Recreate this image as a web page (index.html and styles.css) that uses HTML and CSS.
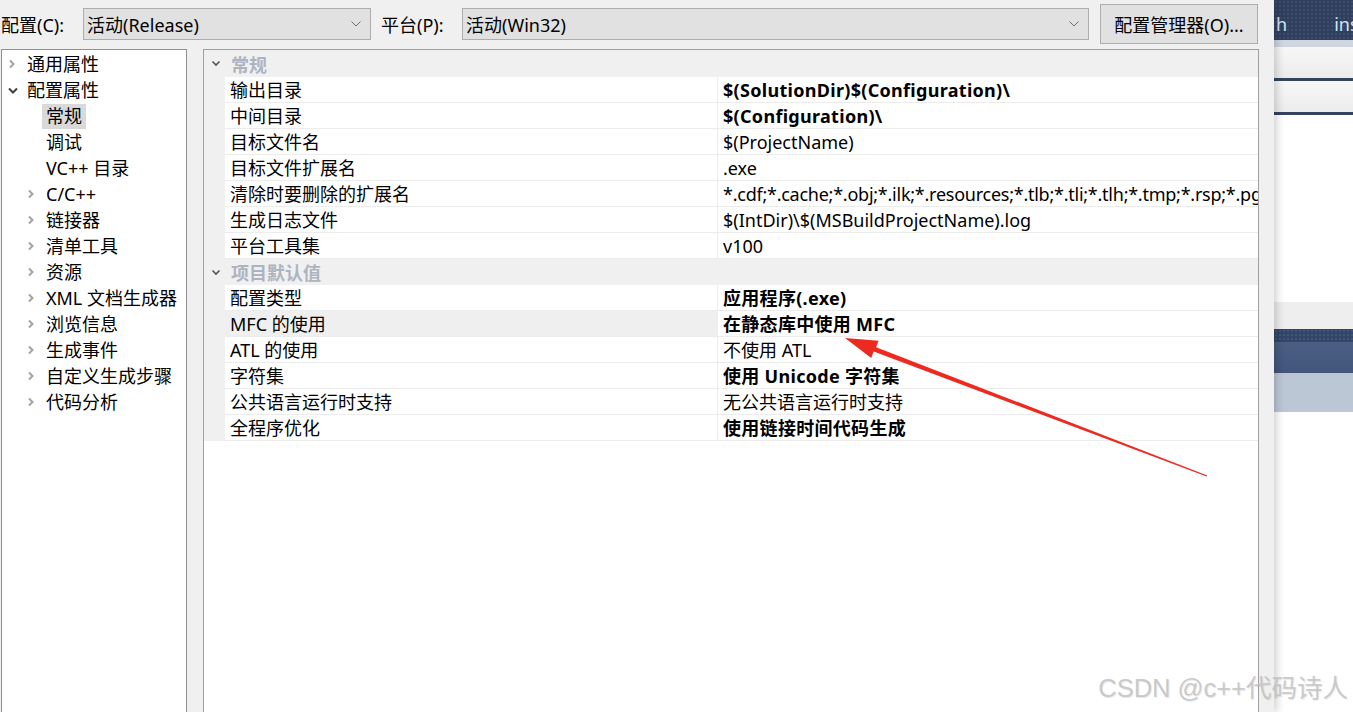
FILE: index.html
```html
<!DOCTYPE html>
<html lang="zh-CN">
<head>
    <meta charset="UTF-8">
    <title>属性页</title>
    <link rel="stylesheet" href="styles.css">
</head>
<body>
<div class="dialog">
    <div class="toolbar">
        <span class="label">配置(C):</span>
        <div class="combo combo-config">
            <span>活动(Release)</span>
            <svg class="drop" width="10" height="6" viewBox="0 0 10 6"><polyline points="0.5,0.5 5,5 9.5,0.5" fill="none" stroke="#6d6d6d" stroke-width="1"/></svg>
        </div>
        <span class="label label-platform">平台(P):</span>
        <div class="combo combo-platform">
            <span>活动(Win32)</span>
            <svg class="drop" width="10" height="6" viewBox="0 0 10 6"><polyline points="0.5,0.5 5,5 9.5,0.5" fill="none" stroke="#6d6d6d" stroke-width="1"/></svg>
        </div>
        <button class="btn">配置管理器(O)...</button>
    </div>

    <div class="main">
        <div class="tree">
            <div class="node"><span class="twig"><svg class="closed" width="8" height="10" viewBox="0 0 8 10"><polyline points="2,1.5 5.5,5 2,8.5" fill="none" stroke="#a3a3a3" stroke-width="2"/></svg></span><span class="name">通用属性</span></div>
            <div class="node"><span class="twig"><svg class="open" width="10" height="7" viewBox="0 0 10 7"><polyline points="1,1.5 5,5.5 9,1.5" fill="none" stroke="#404040" stroke-width="2"/></svg></span><span class="name">配置属性</span></div>
            <div class="node child"><span class="twig"></span><span class="name selected">常规</span></div>
            <div class="node child"><span class="twig"></span><span class="name">调试</span></div>
            <div class="node child"><span class="twig"></span><span class="name">VC++ 目录</span></div>
            <div class="node child"><span class="twig"><svg class="closed" width="8" height="10" viewBox="0 0 8 10"><polyline points="2,1.5 5.5,5 2,8.5" fill="none" stroke="#a3a3a3" stroke-width="2"/></svg></span><span class="name">C/C++</span></div>
            <div class="node child"><span class="twig"><svg class="closed" width="8" height="10" viewBox="0 0 8 10"><polyline points="2,1.5 5.5,5 2,8.5" fill="none" stroke="#a3a3a3" stroke-width="2"/></svg></span><span class="name">链接器</span></div>
            <div class="node child"><span class="twig"><svg class="closed" width="8" height="10" viewBox="0 0 8 10"><polyline points="2,1.5 5.5,5 2,8.5" fill="none" stroke="#a3a3a3" stroke-width="2"/></svg></span><span class="name">清单工具</span></div>
            <div class="node child"><span class="twig"><svg class="closed" width="8" height="10" viewBox="0 0 8 10"><polyline points="2,1.5 5.5,5 2,8.5" fill="none" stroke="#a3a3a3" stroke-width="2"/></svg></span><span class="name">资源</span></div>
            <div class="node child"><span class="twig"><svg class="closed" width="8" height="10" viewBox="0 0 8 10"><polyline points="2,1.5 5.5,5 2,8.5" fill="none" stroke="#a3a3a3" stroke-width="2"/></svg></span><span class="name">XML 文档生成器</span></div>
            <div class="node child"><span class="twig"><svg class="closed" width="8" height="10" viewBox="0 0 8 10"><polyline points="2,1.5 5.5,5 2,8.5" fill="none" stroke="#a3a3a3" stroke-width="2"/></svg></span><span class="name">浏览信息</span></div>
            <div class="node child"><span class="twig"><svg class="closed" width="8" height="10" viewBox="0 0 8 10"><polyline points="2,1.5 5.5,5 2,8.5" fill="none" stroke="#a3a3a3" stroke-width="2"/></svg></span><span class="name">生成事件</span></div>
            <div class="node child"><span class="twig"><svg class="closed" width="8" height="10" viewBox="0 0 8 10"><polyline points="2,1.5 5.5,5 2,8.5" fill="none" stroke="#a3a3a3" stroke-width="2"/></svg></span><span class="name">自定义生成步骤</span></div>
            <div class="node child"><span class="twig"><svg class="closed" width="8" height="10" viewBox="0 0 8 10"><polyline points="2,1.5 5.5,5 2,8.5" fill="none" stroke="#a3a3a3" stroke-width="2"/></svg></span><span class="name">代码分析</span></div>
        </div>

        <div class="grid">
            <div class="section first">
                <span class="gutter"><svg width="10" height="7" viewBox="0 0 10 7"><polyline points="1.5,1.5 5,5 8.5,1.5" fill="none" stroke="#555" stroke-width="1.6"/></svg></span>
                <span class="section-title">常规</span>
            </div>
            <div class="row"><span class="gutter"></span><span class="prop">输出目录</span><span class="val bold">$(SolutionDir)$(Configuration)\</span></div>
            <div class="row"><span class="gutter"></span><span class="prop">中间目录</span><span class="val bold">$(Configuration)\</span></div>
            <div class="row"><span class="gutter"></span><span class="prop">目标文件名</span><span class="val">$(ProjectName)</span></div>
            <div class="row"><span class="gutter"></span><span class="prop">目标文件扩展名</span><span class="val">.exe</span></div>
            <div class="row"><span class="gutter"></span><span class="prop">清除时要删除的扩展名</span><span class="val tight">*.cdf;*.cache;*.obj;*.ilk;*.resources;*.tlb;*.tli;*.tlh;*.tmp;*.rsp;*.pgc;*.pgd;*.meta;*.tlog;*.manifest;*.res;*.pch;*.exp;*.idb;*.rep;*.xdc;*.pdb;*_manifest.rc;*.bsc;*.sbr;*.xml;*.metagen;*.bi</span></div>
            <div class="row"><span class="gutter"></span><span class="prop">生成日志文件</span><span class="val">$(IntDir)\$(MSBuildProjectName).log</span></div>
            <div class="row"><span class="gutter"></span><span class="prop">平台工具集</span><span class="val">v100</span></div>
            <div class="section">
                <span class="gutter"><svg width="10" height="7" viewBox="0 0 10 7"><polyline points="1.5,1.5 5,5 8.5,1.5" fill="none" stroke="#555" stroke-width="1.6"/></svg></span>
                <span class="section-title">项目默认值</span>
            </div>
            <div class="row"><span class="gutter"></span><span class="prop">配置类型</span><span class="val bold">应用程序(.exe)</span></div>
            <div class="row current"><span class="gutter"></span><span class="prop">MFC 的使用</span><span class="val bold">在静态库中使用 MFC</span></div>
            <div class="row"><span class="gutter"></span><span class="prop">ATL 的使用</span><span class="val">不使用 ATL</span></div>
            <div class="row"><span class="gutter"></span><span class="prop">字符集</span><span class="val bold">使用 Unicode 字符集</span></div>
            <div class="row"><span class="gutter"></span><span class="prop">公共语言运行时支持</span><span class="val">无公共语言运行时支持</span></div>
            <div class="row"><span class="gutter"></span><span class="prop">全程序优化</span><span class="val bold">使用链接时间代码生成</span></div>
        </div>
    </div>
</div>

<div class="backwin">
    <div class="bw-title"><span class="bw-tab">h</span><span class="bw-tab">ins</span></div>
    <div class="bw-line"></div>
    <div class="bw-bar"></div>
    <div class="bw-dark thin"></div>
    <div class="bw-bar"></div>
    <div class="bw-dark thin"></div>
    <div class="bw-white tall"></div>
    <div class="bw-gray"></div>
    <div class="bw-dots"></div>
    <div class="bw-blue"></div>
    <div class="bw-pale"></div>
    <div class="bw-white"></div>
</div>

<!-- annotation drawn over the screenshot -->
<svg class="arrow" width="1353" height="712" viewBox="0 0 1353 712">
    <polygon points="845,338 878.6,340.8 876.1,347.2 1207.3,475.4 1206.7,476.6 873.7,351.6 871.2,358" fill="#ee2a20"/>
</svg>
<div class="watermark">CSDN @c++代码诗人</div>
</body>
</html>
```

FILE: styles.css
```css
body {
    margin: 0;
    height: 712px;
    overflow: hidden;
    display: flex;
    position: relative;
    font-family: "Noto Sans", "Noto Sans CJK SC", sans-serif;
    font-size: 18px;
    color: #000;
    background: #fff;
}

.dialog {
    width: 1274px;
    flex: none;
    display: flex;
    flex-direction: column;
    background-color: #f0f0f0;
    position: relative;
    z-index: 1;
    box-shadow: 3px 0 8px rgba(0, 0, 0, 0.18);
}

/* top row: configuration / platform pickers */
.toolbar {
    height: 49px;
    flex: none;
    display: flex;
    align-items: center;
    padding: 0 0 2px 1px;
    box-sizing: border-box;
}

.label {
    width: 82px;
    white-space: nowrap;
}

.label-platform {
    width: 81px;
    margin-left: 10px;
}

.combo {
    height: 32px;
    box-sizing: border-box;
    background-color: #e1e1e1;
    border: 1px solid #adadad;
    display: flex;
    align-items: center;
    justify-content: space-between;
    padding: 0 9px 0 3px;
    white-space: nowrap;
}

.combo-config {
    width: 288px;
}

.combo-platform {
    width: 627px;
}

.btn {
    width: 158px;
    height: 40px;
    margin-left: 11px;
    background-color: #e1e1e1;
    border: 1px solid #adadad;
    font: inherit;
    color: #000;
    padding: 0;
    white-space: nowrap;
}

.main {
    flex: 1;
    display: flex;
    gap: 16px;
    padding-left: 1px;
    min-height: 0;
}

/* left tree */
.tree {
    width: 186px;
    box-sizing: border-box;
    background: #fff;
    border: 1px solid #8f8f96;
    border-bottom: none;
    padding-top: 1px;
}

.node {
    height: 26px;
    display: flex;
    align-items: center;
    padding-left: 2px;
    white-space: nowrap;
}

.node.child {
    padding-left: 21px;
}

.twig {
    width: 19px;
    flex: none;
    display: flex;
    align-items: center;
    justify-content: center;
}

.twig .open {
    margin-left: -2px;
}

.twig .closed {
    margin-left: -3px;
}

.name {
    padding: 0 4px;
    line-height: 25px;
}

.name.selected {
    background-color: #d9d9d9;
}

/* property grid */
.grid {
    width: 1056px;
    box-sizing: border-box;
    background: #fff;
    border: 1px solid #a0a0a0;
    border-bottom: none;
    display: flex;
    flex-direction: column;
}

.section {
    height: 26px;
    flex: none;
    display: flex;
    align-items: center;
    background-color: #f0f0f0;
}

.section.first {
    height: 27px;
}

.section-title {
    padding-left: 6px;
    font-weight: bold;
    color: #adb4c0;
}

.gutter {
    width: 21px;
    flex: none;
    align-self: stretch;
    background-color: #f0f0f0;
    display: flex;
    align-items: center;
    justify-content: center;
    padding-left: 3px;
    box-sizing: border-box;
}

.row {
    height: 26px;
    flex: none;
    display: flex;
}

.prop,
.val {
    box-sizing: border-box;
    border-bottom: 1px solid #ececec;
    line-height: 26px;
    white-space: nowrap;
    overflow: hidden;
}

.prop {
    width: 492px;
    flex: none;
    padding-left: 5px;
}

.val {
    flex: 1;
    min-width: 0;
    padding-left: 5px;
    border-left: 1px solid #ececec;
}

.val.bold {
    font-weight: bold;
    letter-spacing: 0.3px;
}

.val.tight {
    letter-spacing: -0.25px;
}

.row.current .prop {
    background-color: #efefef;
}

/* window peeking out behind the dialog */
.backwin {
    flex: 1;
    display: flex;
    flex-direction: column;
    background: #fff;
}

.bw-title {
    height: 40px;
    flex: none;
    display: flex;
    align-items: flex-end;
    gap: 47px;
    padding: 0 0 4px 2px;
    box-sizing: border-box;
    background-color: #2f405f;
    background-image: radial-gradient(rgba(255, 255, 255, 0.07) 1px, transparent 1px);
    background-size: 4px 4px;
    color: #d4e3f5;
    white-space: nowrap;
    overflow: hidden;
}

.bw-line {
    height: 7px;
    background-color: #cfd6e1;
}

.bw-bar {
    height: 31px;
    background: linear-gradient(#f7f7f7, #ececec);
}

.bw-dark.thin {
    height: 3px;
    background-color: #34445f;
}

.bw-white.tall {
    height: 187px;
    flex: none;
}

.bw-white {
    flex: 1;
    background: #fff;
}

.bw-gray {
    height: 27px;
    background-color: #eeeeee;
}

.bw-dots {
    height: 13px;
    background-color: #33466a;
    background-image: radial-gradient(rgba(255, 255, 255, 0.08) 1px, transparent 1px);
    background-size: 4px 4px;
}

.bw-blue {
    height: 31px;
    background: linear-gradient(#4b5f84, #42557a);
}

.bw-pale {
    height: 39px;
    background-color: #bcc7d6;
}

.arrow {
    position: absolute;
    left: 0;
    top: 0;
    z-index: 2;
    pointer-events: none;
}

.watermark {
    position: absolute;
    right: 5px;
    bottom: 8px;
    z-index: 3;
    font-family: "Liberation Sans", "Noto Sans CJK SC", sans-serif;
    font-size: 25.5px;
    color: rgba(195, 195, 195, 0.85);
    text-shadow: 1px 1px 1px rgba(0, 0, 0, 0.1);
    white-space: nowrap;
}
```
